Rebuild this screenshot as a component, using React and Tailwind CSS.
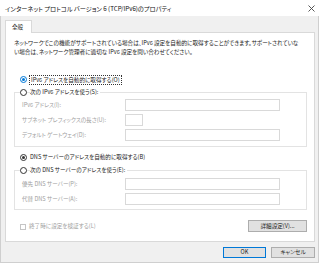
const Radio = ({ checked, focus }) => (
  <span
    className={`inline-flex items-center justify-center w-[7px] h-[7px] rounded-full border bg-white shrink-0 ${
      focus ? 'border-[#0078d7]' : 'border-[#333]'
    }`}
  >
    {checked && <span className={`w-[3px] h-[3px] rounded-full ${focus ? 'bg-[#0078d7]' : 'bg-[#333]'}`}></span>}
  </span>
);

const Field = ({ label, width = 'w-[155px]' }) => (
  <div className="flex items-center h-[12px]">
    <span className="w-[103px] text-[#a0a0a0] whitespace-nowrap">{label}</span>
    <span className={`${width} h-[12px] border border-[#d9d9d9] bg-white`}></span>
  </div>
);

export default function App() {
  return (
    <div className="w-[320px] h-[265px] bg-white overflow-hidden text-[5.6px] leading-[9px] text-[#222] font-['Noto_Sans_CJK_JP',sans-serif] [font-feature-settings:'palt']">
      <div className="h-[16px] bg-white flex items-center justify-between pl-[5px] pr-[5px] text-[6.2px] text-[#111]">
        <span>インターネット プロトコル バージョン 6 (TCP/IPv6)のプロパティ</span>
        <svg width="7" height="7" viewBox="0 0 7 7">
          <path d="M0.5 0.5 L6.5 6.5 M6.5 0.5 L0.5 6.5" stroke="#444" strokeWidth="0.9" />
        </svg>
      </div>

      <div className="h-[247px] w-[319px] bg-[#f0f0f0] border-l border-r border-b border-[#cfcfcf] pl-[4px] pr-[3px] pt-[4px]">
        <div className="flex">
          <div className="w-[27px] h-[13px] bg-white border border-[#d9d9d9] border-b-0 flex items-center pl-[6px] -mb-px relative">
            全般
          </div>
        </div>
        <div className="h-[210px] bg-white border border-[#d9d9d9] pl-[8px] pr-[7px] pt-[6px]">
          <p className="whitespace-nowrap">
            ネットワークでこの機能がサポートされている場合は、IPv6 設定を自動的に取得することができます。サポートされていな
            <br />
            い場合は、ネットワーク管理者に適切な IPv6 設定を問い合わせてください。
          </p>

          <div className="mt-[18px] flex items-center gap-[3px] pl-[6px] h-[9px]">
            <Radio checked focus />
            <span className="outline outline-1 outline-dotted outline-[#333] px-px leading-[8px]">IPv6 アドレスを自動的に取得する(O)</span>
          </div>

          <div className="mt-[8px] border border-[#e3e3e3] h-[55px]">
            <div className="-mt-[5px] flex items-center gap-[3px] pl-[5px] h-[9px]">
              <Radio />
              <span className="bg-white pr-[2px]">次の IPv6 アドレスを使う(S):</span>
            </div>
            <div className="pl-[7px] pt-[2px] flex flex-col gap-[3px]">
              <Field label="IPv6 アドレス(I):" />
              <Field label="サブネット プレフィックスの長さ(U):" width="w-[18px]" />
              <Field label="デフォルト ゲートウェイ(D):" />
            </div>
          </div>

          <div className="mt-[6px] flex items-center gap-[3px] pl-[6px] h-[9px]">
            <Radio checked />
            <span>DNS サーバーのアドレスを自動的に取得する(B)</span>
          </div>

          <div className="mt-[8px] border border-[#e3e3e3] h-[40px]">
            <div className="-mt-[5px] flex items-center gap-[3px] pl-[5px] h-[9px]">
              <Radio />
              <span className="bg-white pr-[2px]">次の DNS サーバーのアドレスを使う(E):</span>
            </div>
            <div className="pl-[7px] pt-[3px] flex flex-col gap-[3px]">
              <Field label="優先 DNS サーバー(P):" />
              <Field label="代替 DNS サーバー(A):" />
            </div>
          </div>

          <div className="mt-[10px] flex items-start justify-between">
            <div className="flex items-center gap-[3px] pl-[6px] pt-[2px] text-[#a0a0a0]">
              <span className="w-[6px] h-[6px] border border-[#c5c5c5] bg-white"></span>
              <span>終了時に設定を検証する(L)</span>
            </div>
            <button className="w-[59px] h-[12px] bg-[#e1e1e1] border border-[#adadad] flex items-center justify-center">
              詳細設定(V)...
            </button>
          </div>
        </div>

        <div className="flex justify-end gap-[5px] pt-[5px]">
          <button className="w-[43px] h-[11px] bg-[#e1e1e1] border border-[#0078d7] flex items-center justify-center">
            OK
          </button>
          <button className="w-[44px] h-[11px] bg-[#e1e1e1] border border-[#adadad] flex items-center justify-center">
            キャンセル
          </button>
        </div>
      </div>
    </div>
  );
}
